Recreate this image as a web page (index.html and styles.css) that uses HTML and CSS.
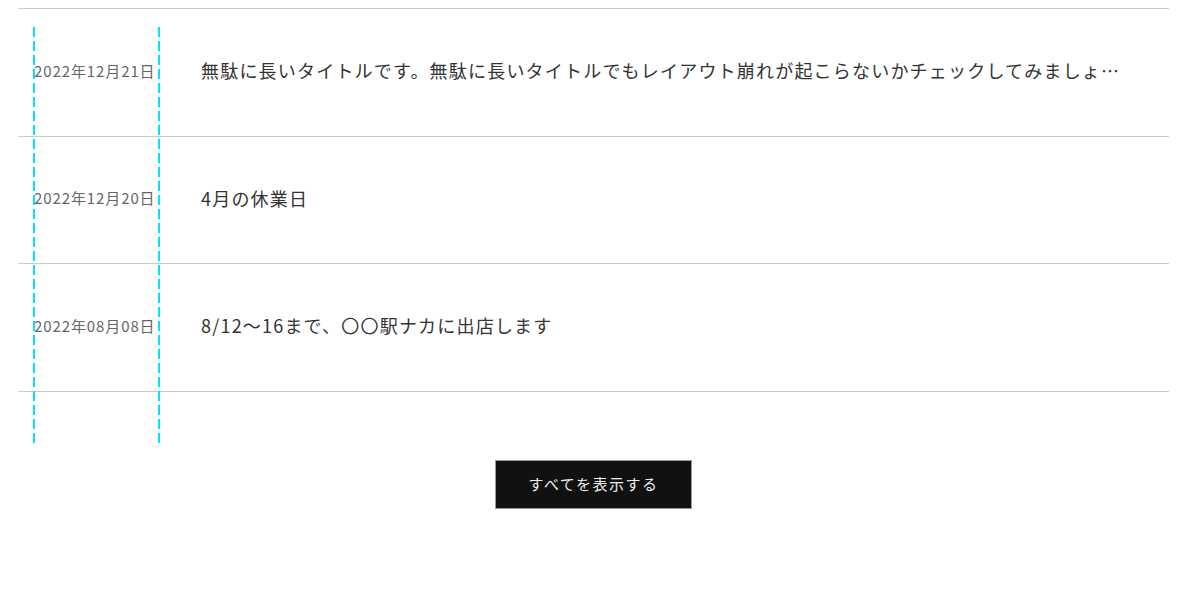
FILE: index.html
```html
<!DOCTYPE html>
<html lang="ja">

<head>
    <meta charset="UTF-8">
    <meta name="viewport" content="width=device-width, initial-scale=1.0">
    <title>お知らせ</title>
    <link rel="stylesheet" href="styles.css">
</head>

<body>
    <section class="news">
        <ul class="news-list">
            <li class="news-item">
                <time class="news-date" datetime="2022-12-21">2022年12月21日</time>
                <a class="news-title" href="#">無駄に長いタイトルです。無駄に長いタイトルでもレイアウト崩れが起こらないかチェックしてみましょう。無駄に長いタイトルです。</a>
            </li>
            <li class="news-item">
                <time class="news-date" datetime="2022-12-20">2022年12月20日</time>
                <a class="news-title" href="#">4月の休業日</a>
            </li>
            <li class="news-item">
                <time class="news-date" datetime="2022-08-08">2022年08月08日</time>
                <a class="news-title" href="#">8/12〜16まで、〇〇駅ナカに出店します</a>
            </li>
        </ul>
        <div class="news-more">
            <a class="more-button" href="#">すべてを表示する</a>
        </div>
        <!-- date column guide -->
        <div class="guide"></div>
    </section>
</body>

</html>
```

FILE: styles.css
```css
body {
    margin: 0;
    background-color: #ffffff;
    font-family: "Noto Sans CJK JP", "Noto Sans", sans-serif;
    color: #333;
}

.news {
    position: relative;
    margin: 8px 31px 0 18px;
}

.news-list {
    list-style: none;
    margin: 0;
    padding: 0;
    border-top: 1px solid #cccccc;
}

.news-item {
    display: flex;
    align-items: center;
    height: 126.6px;
    box-sizing: content-box;
    border-bottom: 1px solid #cccccc;
    padding: 0 38px 0 16px;
}

.news-date {
    flex: 0 0 124px;
    margin-bottom: 4px;
    font-size: 15px;
    letter-spacing: 0.9px;
    color: #666;
    white-space: nowrap;
}

.news-title {
    margin-left: 43px;
    margin-bottom: 4px;
    min-width: 0;
    font-size: 18px;
    letter-spacing: 1.2px;
    color: #333;
    text-decoration: none;
    white-space: nowrap;
    overflow: hidden;
    text-overflow: ellipsis;
}

.news-more {
    display: flex;
    justify-content: center;
    padding-top: 68px;
}

.more-button {
    display: flex;
    justify-content: center;
    align-items: center;
    width: 195px;
    height: 46px;
    padding-bottom: 1px;
    background-color: #111111;
    border: 1px solid #999;
    color: #eeeeee;
    font-size: 15px;
    letter-spacing: 1.5px;
    text-decoration: none;
}

/* dashed guide lines over the date column */
.guide {
    position: absolute;
    top: 19px;
    left: 15px;
    width: 127px;
    height: 416px;
    background:
        repeating-linear-gradient(to bottom, #00e5ff 0 10px, transparent 10px 14px) left / 2px 100% no-repeat,
        repeating-linear-gradient(to bottom, #00e5ff 0 10px, transparent 10px 14px) right / 2px 100% no-repeat;
    pointer-events: none;
}
```
